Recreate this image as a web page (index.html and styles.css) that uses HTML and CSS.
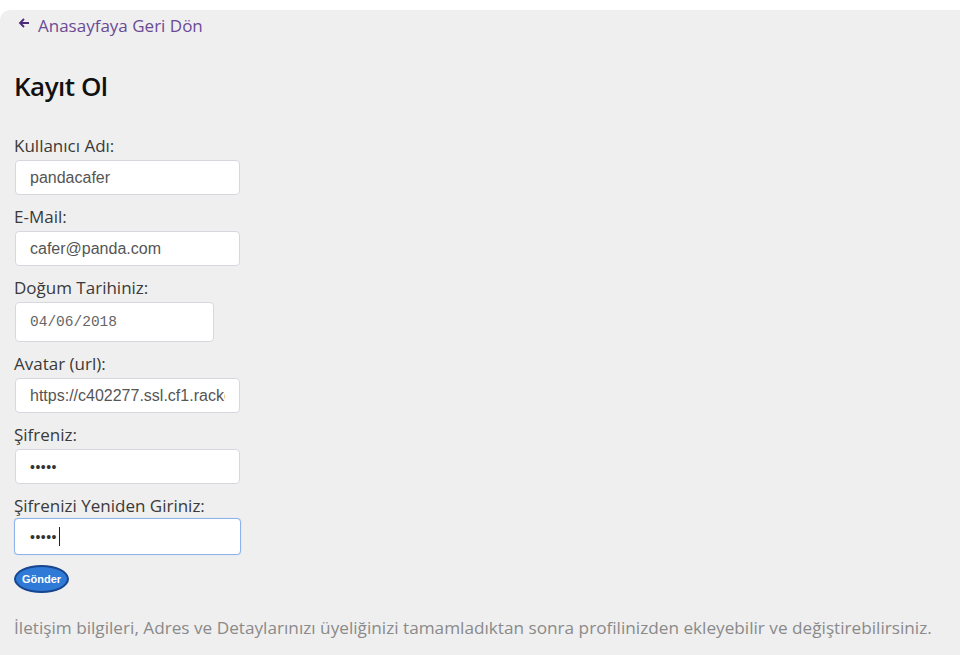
FILE: index.html
```html
<!DOCTYPE html>
<html lang="tr">
<head>
<meta charset="utf-8">
<title>Kayıt Ol</title>
<link rel="stylesheet" href="styles.css">
</head>
<body>
<div class="panel">
  <a class="back" href="#">
    <svg class="back-icon" width="12" height="12" viewBox="0 0 12 12"><path d="M11 6H2.5M6 2L2 6l4 4" fill="none" stroke="#4b2a78" stroke-width="1.8"/></svg>
    <span>Anasayfaya Geri Dön</span>
  </a>
  <h1 class="title">Kayıt Ol</h1>
  <form class="form">
    <div class="field">
      <label class="label" for="u">Kullanıcı Adı:</label>
      <input class="input" id="u" type="text" value="pandacafer">
    </div>
    <div class="field">
      <label class="label" for="m">E-Mail:</label>
      <input class="input" id="m" type="text" value="cafer@panda.com">
    </div>
    <div class="field">
      <label class="label" for="d">Doğum Tarihiniz:</label>
      <input class="input date" id="d" type="text" value="04/06/2018">
    </div>
    <div class="field">
      <label class="label" for="a">Avatar (url):</label>
      <input class="input" id="a" type="text" value="https://c402277.ssl.cf1.rackcdn.com/photos/panda.jpg">
    </div>
    <div class="field">
      <label class="label" for="p1">Şifreniz:</label>
      <input class="input" id="p1" type="password" value="12345">
    </div>
    <div class="field">
      <label class="label" for="p2">Şifrenizi Yeniden Giriniz:</label>
      <div class="input-wrap">
        <input class="input focus" id="p2" type="password" value="12345">
        <span class="caret"></span>
      </div>
    </div>
    <button class="submit" type="button">Gönder</button>
  </form>
  <p class="note">İletişim bilgileri, Adres ve Detaylarınızı üyeliğinizi tamamladıktan sonra profilinizden ekleyebilir ve değiştirebilirsiniz.</p>
</div>
</body>
</html>
```
FILE: styles.css
```css
html, body {
  margin: 0;
  padding: 0;
  background: #ffffff;
}
body {
  padding-top: 10px;
  font-family: "Open Sans", "Noto Sans", sans-serif;
}
.panel {
  background: #efefef;
  border-top-left-radius: 10px;
  min-height: 645px;
  box-sizing: border-box;
  padding: 3px 0 0 14px;
}
.back {
  display: flex;
  align-items: center;
  gap: 8px;
  color: #6b4a96;
  text-decoration: none;
  font-size: 17px;
  height: 24px;
  padding-left: 4px;
}
.back-icon {
  margin-top: -4px;
}
.title {
  margin: 33px 0 0 0;
  font-size: 26px;
  font-weight: 600;
  color: #111;
  line-height: 32px;
  letter-spacing: -0.5px;
}
.form {
  margin-top: 32px;
  display: flex;
  flex-direction: column;
  align-items: flex-start;
}
.field {
  display: flex;
  flex-direction: column;
  align-items: flex-start;
  margin-bottom: 10px;
}
.label {
  font-size: 17px;
  color: #3a3a3a;
  line-height: 23px;
  height: 23px;
  padding-bottom: 3px;
}
.input {
  box-sizing: border-box;
  width: 225px;
  height: 35px;
  margin: 0 0 0 1px;
  background: #fff;
  border: 1px solid #d5d9de;
  border-radius: 4px;
  padding: 0 14px;
  font-family: "Liberation Sans", Arial, sans-serif;
  font-size: 16px;
  color: #555;
  outline: none;
}
.date {
  width: 199px;
  height: 40px;
  font-family: "Liberation Mono", monospace;
  font-size: 14.5px;
  color: #666;
}
.input[type="password"] {
  color: #333;
  font-size: 14px;
  letter-spacing: 0.5px;
}
.input-wrap {
  position: relative;
  margin-top: -2px;
}
.focus {
  width: 227px;
  height: 37px;
  margin-left: 0;
  padding-left: 15px;
  border: 1.5px solid #8db3ea;
  box-shadow: 0 0 1px #a7c6f2;
}
.caret {
  position: absolute;
  left: 45px;
  top: 9px;
  width: 1px;
  height: 19px;
  background: #222;
}
.submit {
  margin-top: 0;
  width: 55px;
  height: 28px;
  border-radius: 50%;
  background: #2e7ad6;
  border: 2px solid #17468e;
  color: #fff;
  font-family: "Liberation Sans", Arial, sans-serif;
  font-size: 11px;
  font-weight: bold;
  padding: 0;
}
.note {
  margin: 24px 0 0 0;
  font-size: 17.2px;
  color: #8a8a8a;
  line-height: 22px;
  white-space: nowrap;
}
```
